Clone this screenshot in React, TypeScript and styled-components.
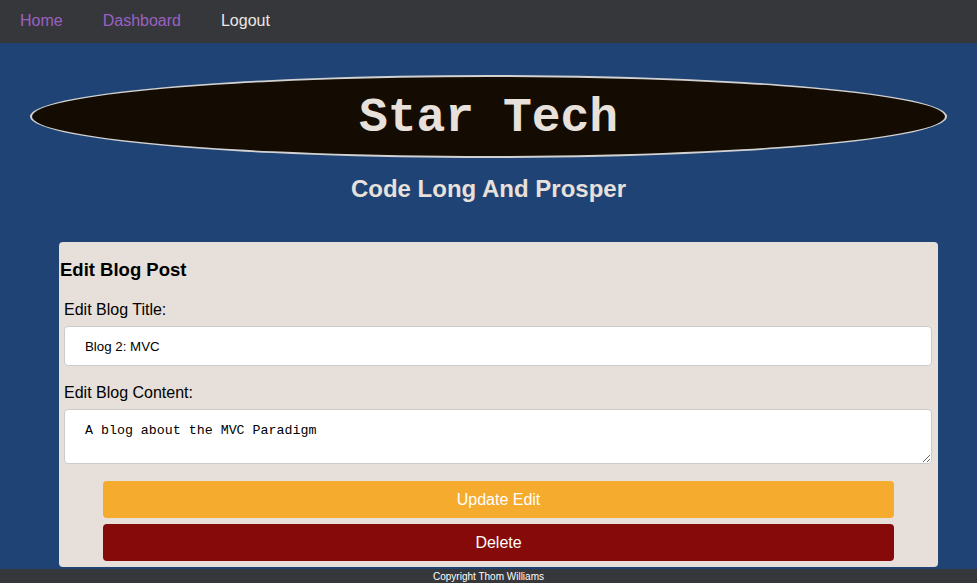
import React, { useState } from "react";
import styled, { createGlobalStyle } from "styled-components";

const GlobalStyle = createGlobalStyle`
  html, body {
    margin: 0;
    padding: 0;
    background: #1f4375;
  }
  body {
    font-family: "Liberation Sans", Arial, sans-serif;
  }
  * {
    box-sizing: border-box;
  }
`;

const Page = styled.div`
  display: flex;
  flex-direction: column;
  height: 583px;
  overflow: hidden;
`;

const NavBar = styled.nav`
  display: flex;
  align-items: center;
  height: 43px;
  background: #36373b;
  padding: 0 0 2px;
`;

const NavLink = styled.a<{ $active?: boolean }>`
  padding: 0 20px;
  font-size: 16px;
  color: ${(p) => (p.$active ? "#ece8e4" : "#9b61c2")};
  text-decoration: none;
  cursor: pointer;
`;

const Main = styled.main`
  flex: 1;
  display: flex;
  flex-direction: column;
  align-items: center;
  background: #1f4375;
`;

const TitleOval = styled.header`
  display: flex;
  align-items: center;
  justify-content: center;
  width: 917px;
  height: 83px;
  margin-top: 32px;
  background: #140c02;
  border: 2px solid #d2d2d2;
  border-radius: 50%;
`;

const SiteTitle = styled.h1`
  margin: 0;
  font-family: "Liberation Mono", "Courier New", monospace;
  font-size: 48px;
  font-weight: bold;
  color: #e8e0db;
  padding-top: 2px;
`;

const Tagline = styled.h2`
  margin: 17px 0 0;
  height: 28px;
  line-height: 28px;
  font-size: 24px;
  font-weight: bold;
  color: #e8e0db;
`;

const Card = styled.section`
  display: flex;
  flex-direction: column;
  width: 879px;
  margin: 39px 0 0 20px;
  padding: 17px 0 6px;
  background: #e6dfda;
  border-radius: 4px;
`;

const CardTitle = styled.h3`
  margin: 0 0 0 1px;
  height: 22px;
  line-height: 22px;
  font-size: 18.5px;
  font-weight: bold;
  color: #000;
`;

const FieldLabel = styled.label<{ $top: number }>`
  display: block;
  margin: ${(p) => p.$top}px 0 0 5px;
  height: 18px;
  line-height: 18px;
  font-size: 16px;
  color: #000;
`;

const TextInput = styled.input`
  display: block;
  margin: 7px 6px 0 5px;
  height: 40px;
  padding: 0 20px;
  border: 1px solid #cbcbcb;
  border-radius: 4px;
  background: #fff;
  font-family: "Liberation Sans", Arial, sans-serif;
  font-size: 13.3px;
  color: #000;
  outline: none;
`;

const TextArea = styled.textarea`
  display: block;
  margin: 7px 6px 0 5px;
  height: 55px;
  padding: 13px 20px;
  border: 1px solid #cbcbcb;
  border-radius: 4px;
  background: #fff;
  font-family: "Liberation Mono", "Courier New", monospace;
  font-size: 13.3px;
  color: #000;
  outline: none;
  resize: vertical;
`;

const ButtonStack = styled.div`
  display: flex;
  flex-direction: column;
  align-items: center;
  gap: 6px;
  margin-top: 17px;
`;

const ActionBtn = styled.button<{ $variant: "update" | "delete" }>`
  width: 791px;
  height: 37px;
  border: none;
  border-radius: 4px;
  background: ${(p) => (p.$variant === "update" ? "#f5ab2e" : "#860a09")};
  color: #fff;
  font-family: "Liberation Sans", Arial, sans-serif;
  font-size: 16px;
  cursor: pointer;
`;

const Footer = styled.footer`
  display: flex;
  align-items: center;
  justify-content: center;
  height: 14px;
  background: #36373b;
  color: #fff;
  font-size: 10px;
`;

const App: React.FC = () => {
  const [title, setTitle] = useState("Blog 2: MVC");
  const [content, setContent] = useState("A blog about the MVC Paradigm");

  return (
    <>
      <GlobalStyle />
      <Page>
        <NavBar>
          <NavLink>Home</NavLink>
          <NavLink>Dashboard</NavLink>
          <NavLink $active>Logout</NavLink>
        </NavBar>
        <Main>
          <TitleOval>
            <SiteTitle>Star Tech</SiteTitle>
          </TitleOval>
          <Tagline>Code Long And Prosper</Tagline>
          <Card>
            <CardTitle>Edit Blog Post</CardTitle>
            <FieldLabel $top={20} htmlFor="post-title">
              Edit Blog Title:
            </FieldLabel>
            <TextInput
              id="post-title"
              type="text"
              value={title}
              onChange={(e) => setTitle(e.target.value)}
            />
            <FieldLabel $top={18} htmlFor="post-content">
              Edit Blog Content:
            </FieldLabel>
            <TextArea
              id="post-content"
              value={content}
              onChange={(e) => setContent(e.target.value)}
            />
            <ButtonStack>
              <ActionBtn $variant="update" type="button">
                Update Edit
              </ActionBtn>
              <ActionBtn $variant="delete" type="button">
                Delete
              </ActionBtn>
            </ButtonStack>
          </Card>
        </Main>
        <Footer>Copyright Thom Williams</Footer>
      </Page>
    </>
  );
};

export default App;
